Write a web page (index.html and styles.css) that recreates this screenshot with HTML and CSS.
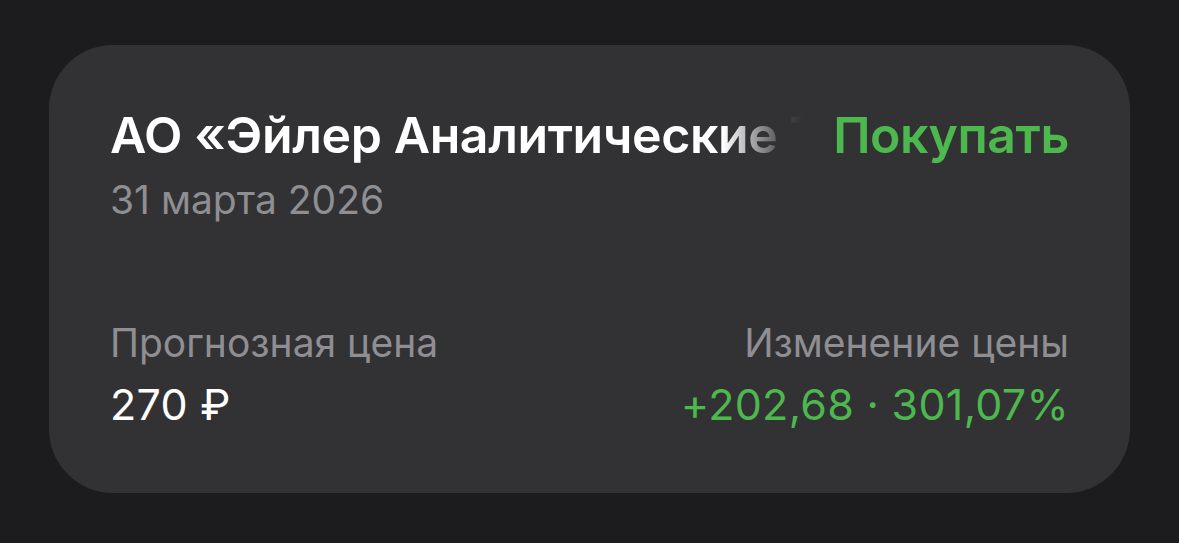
FILE: index.html
```html
<!DOCTYPE html>
<html lang="ru">
<head>
<meta charset="utf-8">
<link rel="stylesheet" href="styles.css">
</head>
<body>
<main class="page">
  <section class="card">
    <div class="head">
      <div class="title-wrap">
        <div class="title">АО «Эйлер Аналитические Технологии»</div>
      </div>
      <div class="action">Покупать</div>
    </div>
    <div class="date">31 марта 2026</div>
    <div class="stats">
      <div class="stat">
        <div class="label">Прогнозная цена</div>
        <div class="value">270 ₽</div>
      </div>
      <div class="stat stat-right">
        <div class="label">Изменение цены</div>
        <div class="value value-green">+202,68 · 301,07%</div>
      </div>
    </div>
  </section>
</main>
</body>
</html>
```

FILE: styles.css
```css
* { box-sizing: border-box; }
html, body {
  margin: 0;
  background: #1c1c1e;
}
body {
  font-family: Inter, "Noto Sans", "Liberation Sans", sans-serif;
  -webkit-font-smoothing: antialiased;
}
.page {
  padding: 45px 49px 50px 49px;
}
.card {
  height: 448px;
  background: #323234;
  border-radius: 64px;
  padding: 59px 61px 0 61px;
  display: flex;
  flex-direction: column;
}
.head {
  display: flex;
  align-items: baseline;
  gap: 30px;
}
.title-wrap {
  flex: 1;
  min-width: 0;
  overflow: hidden;
  -webkit-mask-image: linear-gradient(to right, #000 calc(100% - 80px), rgba(0,0,0,0.12) calc(100% - 20px), transparent 100%);
  mask-image: linear-gradient(to right, #000 calc(100% - 80px), rgba(0,0,0,0.12) calc(100% - 20px), transparent 100%);
}
.title {
  white-space: nowrap;
  color: #ffffff;
  font-size: 50px;
  letter-spacing: -0.4px;
  line-height: 62px;
  font-weight: 600;
}
.action {
  color: #4cb84e;
  font-size: 50px;
  letter-spacing: -0.4px;
  line-height: 62px;
  font-weight: 600;
  white-space: nowrap;
}
.date {
  margin-top: 10px;
  color: #8e8e93;
  font-size: 39px;
  line-height: 48px;
}
.stats {
  margin-top: 95px;
  display: flex;
  justify-content: space-between;
}
.stat {
  display: flex;
  flex-direction: column;
  gap: 13px;
}
.stat-right {
  align-items: flex-end;
}
.label {
  color: #8e8e93;
  font-size: 39px;
  line-height: 48px;
}
.value {
  color: #ffffff;
  font-size: 43px;
  letter-spacing: 0.3px;
  line-height: 48px;
}
.value-green {
  color: #4cb84e;
}
```
